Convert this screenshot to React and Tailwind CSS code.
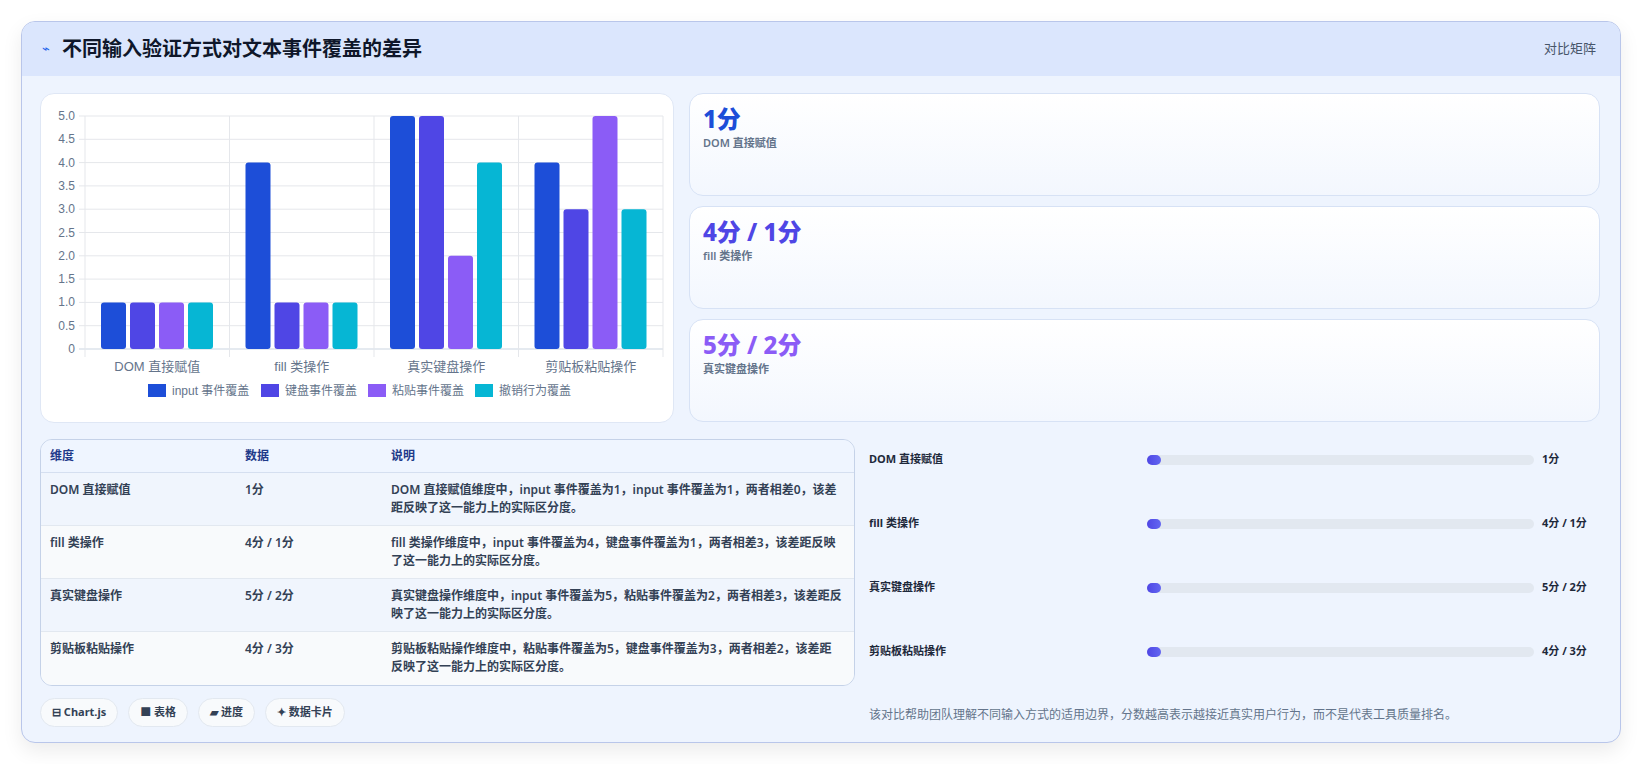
import React from "react";

const F = { fontFamily: '"Noto Sans", "Noto Sans CJK SC", sans-serif' };
const colors = ["#1d4ed8", "#4f46e5", "#8b5cf6", "#06b6d4"];
const cats = ["DOM 直接赋值", "fill 类操作", "真实键盘操作", "剪贴板粘贴操作"];
const data = [
  [1, 1, 1, 1],
  [4, 1, 1, 1],
  [5, 5, 2, 4],
  [4, 3, 5, 3],
];
const legend = ["input 事件覆盖", "键盘事件覆盖", "粘贴事件覆盖", "撤销行为覆盖"];

function Chart() {
  const L = 44, R = 622, T = 22, B = 255;
  const gw = (R - L) / 4;
  const y = (v) => B - (v / 5) * (B - T);
  const ticks = [0, 0.5, 1, 1.5, 2, 2.5, 3, 3.5, 4, 4.5, 5];
  return (
    <svg width="633" height="327" style={{ fontFamily: '"Liberation Sans", "Noto Sans CJK SC", sans-serif' }}>
      {ticks.map((t) => (
        <g key={t}>
          <line x1={L - 6} x2={R} y1={y(t)} y2={y(t)} stroke={t === 0 ? "#cbd5e1" : "#e5e7eb"} />
          <text x={L - 10} y={y(t) + 4} textAnchor="end" fontSize="12" fill="#64748b">{t === 0 ? "0" : t.toFixed(1)}</text>
        </g>
      ))}
      {[0, 1, 2, 3, 4].map((i) => (
        <line key={i} x1={L + i * gw} x2={L + i * gw} y1={T} y2={B + 8} stroke="#e5e7eb" />
      ))}
      {data.map((g, gi) =>
        g.map((v, bi) => {
          const x = L + gi * gw + 16 + bi * 29;
          return <rect key={gi + "-" + bi} x={x} y={y(v)} width="25" height={B - y(v)} rx="3" fill={colors[bi]} />;
        })
      )}
      {cats.map((c, i) => (
        <text key={c} x={L + i * gw + gw / 2} y="277" textAnchor="middle" fontSize="13" fill="#64748b">{c}</text>
      ))}
      {legend.map((l, i) => {
        const xs = [107, 220, 327, 434];
        return (
          <g key={l}>
            <rect x={xs[i]} y="290" width="18" height="13" fill={colors[i]} />
            <text x={xs[i] + 24} y="301" fontSize="12" fill="#64748b">{l}</text>
          </g>
        );
      })}
    </svg>
  );
}

const stats = [
  { v: "1分", l: "DOM 直接赋值", c: "text-[#1d4ed8]" },
  { v: "4分 / 1分", l: "fill 类操作", c: "text-[#4f46e5]" },
  { v: "5分 / 2分", l: "真实键盘操作", c: "text-[#8b5cf6]" },
];

const rows = [
  ["DOM 直接赋值", "1分", "DOM 直接赋值维度中，input 事件覆盖为1，input 事件覆盖为1，两者相差0，该差距反映了这一能力上的实际区分度。"],
  ["fill 类操作", "4分 / 1分", "fill 类操作维度中，input 事件覆盖为4，键盘事件覆盖为1，两者相差3，该差距反映了这一能力上的实际区分度。"],
  ["真实键盘操作", "5分 / 2分", "真实键盘操作维度中，input 事件覆盖为5，粘贴事件覆盖为2，两者相差3，该差距反映了这一能力上的实际区分度。"],
  ["剪贴板粘贴操作", "4分 / 3分", "剪贴板粘贴操作维度中，粘贴事件覆盖为5，键盘事件覆盖为3，两者相差2，该差距反映了这一能力上的实际区分度。"],
];

export default function App() {
  return (
    <div className="w-[1642px] h-[764px] bg-white pt-[21px] pl-[21px]" style={F}>
      <div className="w-[1600px] h-[722px] rounded-[14px] border border-[#b9c6ea] bg-[#eef4fe] overflow-hidden shadow-[0_8px_20px_rgba(0,0,0,0.08)]">
        <div className="h-[54px] bg-[#dbe6fd] flex items-center justify-between px-5">
          <div className="flex items-center gap-3">
            <span className="text-[#2563eb] text-[13px]">⌁</span>
            <span className="text-[20px] font-bold text-[#0f172a]">不同输入验证方式对文本事件覆盖的差异</span>
          </div>
          <span className="text-[13px] text-[#475569] mr-1">对比矩阵</span>
        </div>
        <div className="px-[18px] pt-[17px]">
          <div className="flex gap-[15px]">
            <div className="w-[634px] h-[330px] bg-white rounded-[14px] border border-[#dfe7f5] shrink-0">
              <Chart />
            </div>
            <div className="flex-1 flex flex-col gap-[10px] mr-[2px]">
              {stats.map((s) => (
                <div key={s.v} className="h-[103px] rounded-[14px] border border-[#d7e2f5] bg-gradient-to-b from-[#ffffff] to-[#f3f7fe] px-[13px] pt-[9px]">
                  <div className={"text-[24px] font-extrabold leading-[32px] " + s.c}>{s.v}</div>
                  <div className="text-[11px] font-semibold text-[#64748b]">{s.l}</div>
                </div>
              ))}
            </div>
          </div>
          <div className="flex gap-[10px] mt-[16px]">
            <div className="w-[815px] shrink-0">
              <div className="rounded-[12px] border border-[#c5d2e8] overflow-hidden text-[12px] text-[#334155]">
                <div className="flex h-[33px] items-center bg-[#eff5ff] border-b border-[#d5dff0] font-semibold text-[#1e3a8a]">
                  <div className="w-[204px] pl-[9px]">维度</div>
                  <div className="w-[146px]">数据</div>
                  <div className="flex-1">说明</div>
                </div>
                {rows.map((r, i) => (
                  <div key={i} className={"flex h-[53px] pt-[8px] " + (i % 2 ? "bg-[#f8fafc]" : "bg-[#f0f5fd]") + (i < 3 ? " border-b border-[#e2e8f0]" : "")}>
                    <div className="w-[204px] pl-[9px] font-semibold">{r[0]}</div>
                    <div className="w-[146px] font-semibold">{r[1]}</div>
                    <div className="flex-1 pr-[12px] leading-[18px] font-semibold">{r[2]}</div>
                  </div>
                ))}
              </div>
              <div className="flex gap-[10px] mt-[12px] text-[11px] font-bold text-[#334155]">
                {["⊟ Chart.js", "■ 表格", "▰ 进度", "✦ 数据卡片"].map((p) => (
                  <span key={p} className="h-[29px] px-[11px] flex items-center rounded-full bg-[#f8fafc] border border-[#e2e8f0]">{p}</span>
                ))}
              </div>
            </div>
            <div className="flex-1 pl-[4px]">
              {rows.map((r, i) => (
                <div key={i} className="h-[64px] flex items-start pt-[12px]">
                  <div className="w-[278px] text-[11px] font-bold text-[#1e293b]">{r[0]}</div>
                  <div className="w-[387px] h-[10px] mt-[4px] rounded-full bg-[#e2e8f0]">
                    <div className="h-[10px] w-[14px] rounded-full bg-gradient-to-r from-[#4f46e5] to-[#6366f1]" />
                  </div>
                  <div className="ml-[8px] text-[11px] font-bold text-[#1e293b]">{r[1]}</div>
                </div>
              ))}
              <div className="mt-[11px] text-[12px] text-[#64748b]">该对比帮助团队理解不同输入方式的适用边界，分数越高表示越接近真实用户行为，而不是代表工具质量排名。</div>
            </div>
          </div>
        </div>
      </div>
    </div>
  );
}
